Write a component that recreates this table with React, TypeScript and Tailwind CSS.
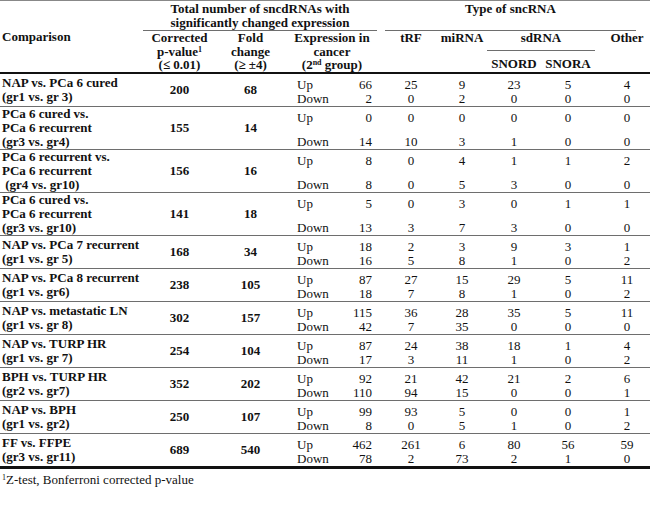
type Row = {
  label: string[];
  p: number;
  fold: number;
  up: number[];
  down: number[];
};

const rows: Row[] = [
  { label: ["NAP vs. PCa 6 cured", "(gr1 vs. gr 3)"], p: 200, fold: 68, up: [66, 25, 9, 23, 5, 4], down: [2, 0, 2, 0, 0, 0] },
  { label: ["PCa 6 cured vs.", "PCa 6 recurrent", "(gr3 vs. gr4)"], p: 155, fold: 14, up: [0, 0, 0, 0, 0, 0], down: [14, 10, 3, 1, 0, 0] },
  { label: ["PCa 6 recurrent vs.", "PCa 6 recurrent", "\u00a0(gr4 vs. gr10)"], p: 156, fold: 16, up: [8, 0, 4, 1, 1, 2], down: [8, 0, 5, 3, 0, 0] },
  { label: ["PCa 6 cured vs.", "PCa 6 recurrent", "(gr3 vs. gr10)"], p: 141, fold: 18, up: [5, 0, 3, 0, 1, 1], down: [13, 3, 7, 3, 0, 0] },
  { label: ["NAP vs. PCa 7 recurrent", "(gr1 vs. gr 5)"], p: 168, fold: 34, up: [18, 2, 3, 9, 3, 1], down: [16, 5, 8, 1, 0, 2] },
  { label: ["NAP vs. PCa 8 recurrent", "(gr1 vs. gr6)"], p: 238, fold: 105, up: [87, 27, 15, 29, 5, 11], down: [18, 7, 8, 1, 0, 2] },
  { label: ["NAP vs. metastatic LN", "(gr1 vs. gr 8)"], p: 302, fold: 157, up: [115, 36, 28, 35, 5, 11], down: [42, 7, 35, 0, 0, 0] },
  { label: ["NAP vs. TURP HR", "(gr1 vs. gr 7)"], p: 254, fold: 104, up: [87, 24, 38, 18, 1, 4], down: [17, 3, 11, 1, 0, 2] },
  { label: ["BPH vs. TURP HR", "(gr2 vs. gr7)"], p: 352, fold: 202, up: [92, 21, 42, 21, 2, 6], down: [110, 94, 15, 0, 0, 1] },
  { label: ["NAP vs. BPH", "(gr1 vs. gr2)"], p: 250, fold: 107, up: [99, 93, 5, 0, 0, 1], down: [8, 0, 5, 1, 0, 2] },
  { label: ["FF vs. FFPE", "(gr3 vs. gr11)"], p: 689, fold: 540, up: [462, 261, 6, 80, 56, 59], down: [78, 2, 73, 2, 1, 0] },
];

// widths of the type columns: tRF, miRNA, SNORD, SNORA, Other
const typeCols = ["w-[52px]", "w-[50px]", "w-[54px]", "w-[54px]", "w-[55px] pl-[9px]"];

function DataRow({ row, last }: { row: Row; last: boolean }) {
  const tall = row.label.length > 2;
  let rowCls = tall ? "h-[43px] border-b border-[#6e6e6e]" : "h-[33px] border-b border-[#6e6e6e]";
  if (last) rowCls = "h-[35px] border-b-[3px] border-[#111]";
  return (
    <div className={`flex ${rowCls}`}>
      <div className="w-[143px] pl-[2px] flex flex-col justify-center font-bold leading-[14px]">
        {row.label.map((l) => (
          <div key={l} className="whitespace-pre">{l}</div>
        ))}
      </div>
      <div className="w-[73px] flex items-center justify-center font-bold">{row.p}</div>
      <div className="w-[69px] flex items-center justify-center font-bold">{row.fold}</div>
      <div className="w-[100px] flex flex-col justify-between leading-[14px]">
        <div className="flex justify-between pl-[12px] pr-[13px] pt-[4px]">
          <span>Up</span>
          <span>{row.up[0]}</span>
        </div>
        <div className="flex justify-between pl-[12px] pr-[13px]">
          <span>Down</span>
          <span>{row.down[0]}</span>
        </div>
      </div>
      {typeCols.map((w, i) => (
        <div key={i} className={`${w} flex flex-col justify-between text-center leading-[14px]`}>
          <div className="pt-[4px]">{row.up[i + 1]}</div>
          <div>{row.down[i + 1]}</div>
        </div>
      ))}
    </div>
  );
}

export default function App() {
  return (
    <div className="w-[650px] h-[517px] bg-white text-[#111] font-['Liberation_Serif',serif] text-[13px] leading-[13.5px]">
      <div className="border-t border-[#888]">
        {/* header */}
        <div className="flex border-b-2 border-[#111] font-bold">
          <div className="w-[143px] pl-[2px] flex items-center">Comparison</div>
          <div className="flex flex-col">
            <div className="flex h-[30px]">
              <div className="w-[234px] h-[30px] pt-[1px] border-b border-[#6e6e6e] text-center">
                Total number of sncdRNAs with
                <br />
                significantly changed expression
              </div>
              <div className="w-[8px]" />
              <div className="w-[251px] h-[30px] pt-[1px] border-b border-[#6e6e6e] text-center">
                Type of sncRNA
              </div>
            </div>
            <div className="flex h-[41px]">
              <div className="w-[73px] text-center">
                Corrected
                <br />
                p-value<sup className="text-[8px]">1</sup>
                <br />
                (≤ 0.01)
              </div>
              <div className="w-[69px] text-center">
                Fold
                <br />
                change
                <br />
                (≥ ±4)
              </div>
              <div className="w-[100px] text-center pr-[6px]">
                Expression in
                <br />
                cancer
                <br />
                (2<sup className="text-[8px]">nd</sup> group)
              </div>
              <div className="w-[52px] text-center">tRF</div>
              <div className="w-[50px] text-center">miRNA</div>
              <div className="w-[108px] flex flex-col">
                <div className="h-[20px] border-b border-[#6e6e6e] text-center">sdRNA</div>
                <div className="flex pt-[6px]">
                  <div className="w-[54px] text-center">SNORD</div>
                  <div className="w-[54px] text-center">SNORA</div>
                </div>
              </div>
              <div className="w-[55px] pl-[9px] text-center">Other</div>
            </div>
          </div>
        </div>
        {/* body */}
        {rows.map((r, i) => (
          <DataRow key={i} row={r} last={i === rows.length - 1} />
        ))}
        <div className="pl-[2px] pt-[4px]">
          <sup className="text-[8px]">1</sup>Z-test, Bonferroni corrected p-value
        </div>
      </div>
    </div>
  );
}
